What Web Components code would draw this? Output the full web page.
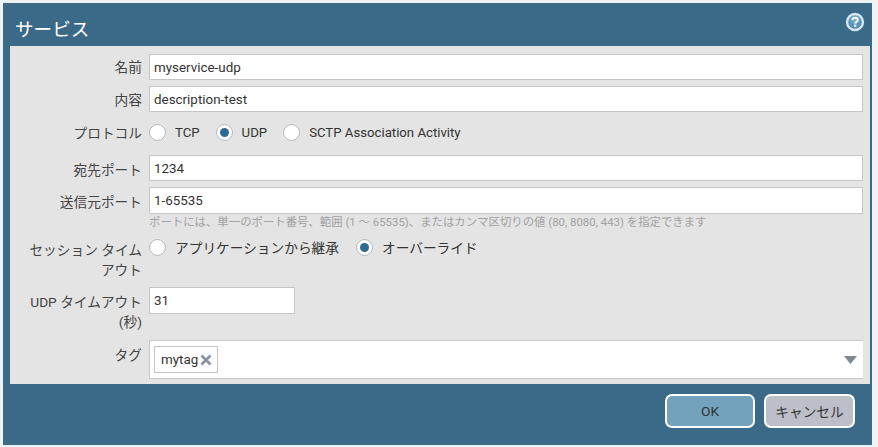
<!DOCTYPE html>
<html lang="ja">
<head>
<meta charset="utf-8">
<title>サービス</title>
<style>
  html, body { margin: 0; padding: 0; background: #eef3f6; }
  body {
    width: 878px;
    height: 447px;
    overflow: hidden;
    font-family: Roboto, "Noto Sans CJK JP", sans-serif;
    font-size: 13.7px;
    color: #333;
  }
</style>
</head>
<body>
<svc-dialog heading="サービス">
  <svc-row label="名前" mt="8" top="3"><svc-input value="myservice-udp"></svc-input></svc-row>
  <svc-row label="内容" mt="6" top="4"><svc-input value="description-test"></svc-input></svc-row>
  <svc-row label="プロトコル" mt="10" top="1">
    <svc-radio-group latin>
      <svc-radio>TCP</svc-radio>
      <svc-radio checked>UDP</svc-radio>
      <svc-radio>SCTP Association Activity</svc-radio>
    </svc-radio-group>
  </svc-row>
  <svc-row label="宛先ポート" mt="12" top="5"><svc-input value="1234"></svc-input></svc-row>
  <svc-row label="送信元ポート" mt="6" top="5">
    <svc-input value="1-65535" tall></svc-input>
    <svc-hint>ポートには、単一のポート番号、範囲 (1 ～ 65535)、またはカンマ区切りの値 (80, 8080, 443) を指定できます</svc-hint>
  </svc-row>
  <svc-row label="セッション タイムアウト" mt="8" top="3">
    <svc-radio-group>
      <svc-radio>アプリケーションから継承</svc-radio>
      <svc-radio checked>オーバーライド</svc-radio>
    </svc-radio-group>
  </svc-row>
  <svc-row label="UDP タイムアウト (秒)" mt="7" top="5"><svc-input value="31" tall narrow></svc-input></svc-row>
  <svc-row label="タグ" mt="8" top="5"><svc-tag-field><svc-tag>mytag</svc-tag></svc-tag-field></svc-row>
  <svc-button slot="footer" primary>OK</svc-button>
  <svc-button slot="footer">キャンセル</svc-button>
</svc-dialog>

<script>
class SvcDialog extends HTMLElement {
  constructor() {
    super()
    this.attachShadow({ mode: 'open' })
  }

  connectedCallback() {
    this.shadowRoot.innerHTML = `
      <style>
        :host {
          display: flex;
          flex-direction: column;
          box-sizing: border-box;
          width: 869px;
          height: 442px;
          margin: 3px 0 0 3px;
          background: #3b6a88;
        }
        header {
          height: 43px;
          flex: none;
          display: flex;
          align-items: center;
          justify-content: space-between;
          padding: 6px 7px 0 12px;
          box-sizing: border-box;
          color: #fff;
          font-size: 18.6px;
        }
        svg { display: block; margin-top: -11px; }
        main {
          height: 338px;
          flex: none;
          box-sizing: border-box;
          margin: 0 2px 0 7px;
          background: #e4e4e4;
          padding-right: 7px;
          display: flow-root;
        }
        footer {
          display: flex;
          justify-content: flex-end;
          gap: 9px;
          padding: 10px 17px 0 0;
        }
      </style>
      <header>
        <span>${this.getAttribute('heading')}</span>
        <svg width="20" height="20" viewBox="0 0 20 20" aria-hidden="true">
          <defs>
            <radialGradient id="g" cx="50%" cy="35%" r="65%">
              <stop offset="0" stop-color="#7fb0d2"/>
              <stop offset="1" stop-color="#3f7fae"/>
            </radialGradient>
          </defs>
          <circle cx="10" cy="10" r="8" fill="url(#g)" stroke="#d5e6f1" stroke-width="2.4"/>
          <path d="M7.4 8 C7.4 6.4 8.6 5.7 10.1 5.7 C11.7 5.7 12.8 6.6 12.8 7.9 C12.8 9.6 10.3 9.7 10.3 11.6" fill="none" stroke="#fff" stroke-width="1.9"/>
          <rect x="9.2" y="12.7" width="2.1" height="2.1" fill="#fff"/>
        </svg>
      </header>
      <main><slot></slot></main>
      <footer><slot name="footer"></slot></footer>
    `
  }
}

class SvcRow extends HTMLElement {
  constructor() {
    super()
    this.attachShadow({ mode: 'open' })
  }

  connectedCallback() {
    this.style.marginTop = (this.getAttribute('mt') || 0) + 'px'
    this.shadowRoot.innerHTML = `
      <style>
        :host {
          display: grid;
          grid-template-columns: 120px 1fr;
          column-gap: 7px;
          padding-left: 12px;
        }
        label {
          text-align: right;
          line-height: 20px;
          padding-top: ${this.getAttribute('top') || 3}px;
          color: #444;
        }
        .value { min-width: 0; }
      </style>
      <label>${this.getAttribute('label')}</label>
      <div class="value"><slot></slot></div>
    `
  }
}

class SvcInput extends HTMLElement {
  constructor() {
    super()
    this.attachShadow({ mode: 'open' })
  }

  connectedCallback() {
    this.shadowRoot.innerHTML = `
      <style>
        :host {
          display: block;
          box-sizing: border-box;
          height: ${this.hasAttribute('tall') ? 27 : 26}px;
          width: ${this.hasAttribute('narrow') ? '146px' : 'auto'};
          background: #fff;
          border: 1px solid #c6c6c6;
          padding-left: 4px;
          font-size: 13.4px;
          line-height: 25px;
          color: #333;
        }
      </style>
      <span>${this.getAttribute('value')}</span>
    `
  }
}

class SvcHint extends HTMLElement {
  constructor() {
    super()
    this.attachShadow({ mode: 'open' }).innerHTML = `
      <style>
        :host {
          display: block;
          font-size: 11.4px;
          line-height: 14px;
          margin-top: 1px;
          color: #a2a2a2;
          white-space: nowrap;
        }
      </style>
      <slot></slot>
    `
  }
}

class SvcRadioGroup extends HTMLElement {
  constructor() {
    super()
    this.attachShadow({ mode: 'open' }).innerHTML = `
      <style>
        :host { display: flex; gap: 17px; align-items: center; height: 20px; }
        :host([latin]) { font-size: 13.2px; gap: 16px; }
      </style>
      <slot></slot>
    `
  }
}

class SvcRadio extends HTMLElement {
  constructor() {
    super()
    this.attachShadow({ mode: 'open' })
  }

  connectedCallback() {
    const dot = this.hasAttribute('checked') ? '<i></i>' : ''
    this.shadowRoot.innerHTML = `
      <style>
        :host { display: inline-flex; align-items: center; gap: 9px; color: #333; white-space: nowrap; }
        b {
          display: flex;
          align-items: center;
          justify-content: center;
          box-sizing: border-box;
          width: 17px;
          height: 17px;
          border-radius: 50%;
          background: #fff;
          border: 1px solid #a9b3ba;
          box-shadow: 0 0 1px #fff;
        }
        i { width: 9px; height: 9px; border-radius: 50%; background: #2f6a92; }
      </style>
      <b>${dot}</b><span><slot></slot></span>
    `
  }
}

class SvcTagField extends HTMLElement {
  constructor() {
    super()
    this.attachShadow({ mode: 'open' }).innerHTML = `
      <style>
        :host {
          display: flex;
          align-items: center;
          justify-content: space-between;
          box-sizing: border-box;
          height: 39px;
          background: #fff;
          border: 1px solid #c9c9c9;
          border-right: none;
          padding: 0 6px 0 4px;
        }
        svg { display: block; margin-top: 1px; }
      </style>
      <slot></slot>
      <svg width="13" height="8" viewBox="0 0 13 8" aria-hidden="true"><path d="M0 0 H13 L6.5 8 Z" fill="#808a94"/></svg>
    `
  }
}

class SvcTag extends HTMLElement {
  constructor() {
    super()
    this.attachShadow({ mode: 'open' }).innerHTML = `
      <style>
        :host {
          display: inline-flex;
          align-items: center;
          gap: 2px;
          box-sizing: border-box;
          height: 27px;
          padding: 0 5px 0 6px;
          border: 1px solid #c6c6c6;
          font-size: 13.4px;
          color: #333;
        }
        svg { display: block; }
      </style>
      <span><slot></slot></span>
      <svg width="12" height="12" viewBox="0 0 12 12" aria-hidden="true"><path d="M1.5 1.5 L10.5 10.5 M10.5 1.5 L1.5 10.5" stroke="#8b93a8" stroke-width="2.8"/></svg>
    `
  }
}

class SvcButton extends HTMLElement {
  constructor() {
    super()
    this.attachShadow({ mode: 'open' })
  }

  connectedCallback() {
    const primary = this.hasAttribute('primary')
    this.shadowRoot.innerHTML = `
      <style>
        :host {
          display: flex;
          align-items: center;
          justify-content: center;
          box-sizing: border-box;
          width: ${primary ? 90 : 91}px;
          height: 34px;
          border: 2px solid #fff;
          border-radius: 7px;
          background: ${primary ? '#72a2bc' : '#bcbfc8'};
          color: #333;
        }
      </style>
      <slot></slot>
    `
  }
}

customElements.define('svc-dialog', SvcDialog)
customElements.define('svc-row', SvcRow)
customElements.define('svc-input', SvcInput)
customElements.define('svc-hint', SvcHint)
customElements.define('svc-radio-group', SvcRadioGroup)
customElements.define('svc-radio', SvcRadio)
customElements.define('svc-tag-field', SvcTagField)
customElements.define('svc-tag', SvcTag)
customElements.define('svc-button', SvcButton)
</script>
</body>
</html>
